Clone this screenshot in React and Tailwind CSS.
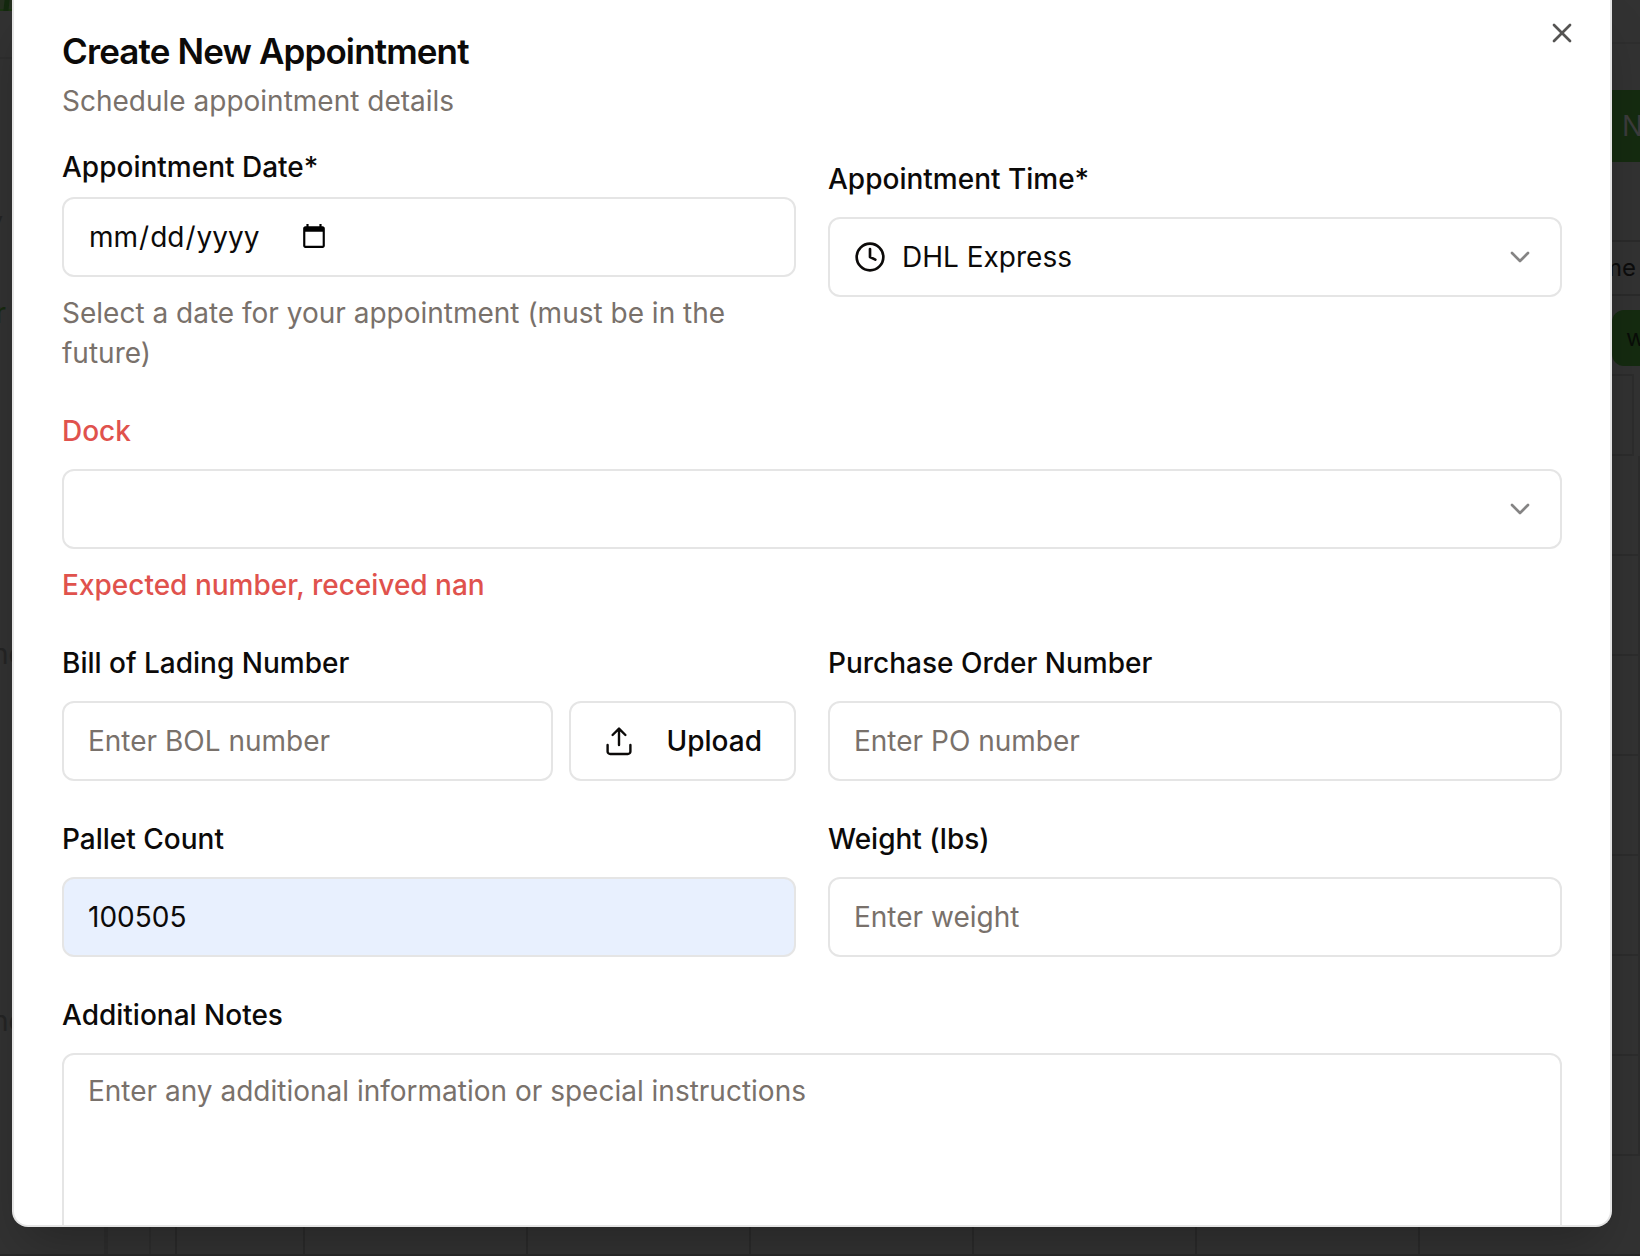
import { ChevronDown, Clock, X } from "lucide-react";

const boxBase = "w-full h-20 rounded-xl border-2 border-[#e5e5e5] px-6 text-[28px] leading-10 text-[#0c0a09] placeholder:text-[#79716b] outline-none";
const box = `${boxBase} bg-white`;

function Label({ htmlFor, error, children }) {
  return (
    <label
      htmlFor={htmlFor}
      className={error ? "block text-[28px] leading-7 font-medium text-[#e0524d]" : "block text-[28px] leading-7 font-medium text-[#0c0a09]"}
    >
      {children}
    </label>
  );
}

function Field({ id, label, error, children }) {
  return (
    <div className="flex flex-1 min-w-0 flex-col gap-6">
      <Label htmlFor={id} error={error}>{label}</Label>
      {children}
    </div>
  );
}

function UploadIcon() {
  return (
    <svg
      viewBox="0 0 32 32"
      className="size-8"
      fill="none"
      stroke="currentColor"
      strokeWidth="2.4"
      strokeLinecap="round"
      strokeLinejoin="round"
      aria-hidden="true"
    >
      <path d="M16 20V4M9.6 10 16 3.6l6.4 6.4" />
      <path d="M4.6 20v6.4a2.6 2.6 0 0 0 2.6 2.6h17.6a2.6 2.6 0 0 0 2.6-2.6V20" />
    </svg>
  );
}

const tableRows = [1, 2, 3, 4, 5, 6, 7];

function Backdrop() {
  return (
    <div aria-hidden="true" className="absolute inset-0 flex flex-col overflow-hidden bg-[#323232]">
      <div className="flex min-h-0 flex-1 justify-between">
        <div className="w-3 overflow-hidden text-[28px] leading-10 text-[#242424]">
          <div className="h-[59px] border-b-2 border-[#2e2e2e]">
            <div className="h-[11px] w-3 border-b-2 border-[#1b3412] bg-[#263020]">
              <div className="ml-1 h-[11px] w-[5px] -skew-x-6 bg-[#14290f]" />
            </div>
          </div>
          <div className="flex h-[234px] items-end justify-end pr-[9px] pb-[56px] text-2xl">y</div>
          <div className="flex justify-end pr-1.5 text-[28px] text-[#17290f]">r</div>
          <div className="flex h-[341px] items-end">
            <span className="-ml-2">ne</span>
          </div>
          <div className="flex h-[367px] items-end">
            <span className="-ml-2">ne</span>
          </div>
        </div>
        <div className="w-[28px] overflow-hidden text-[28px] leading-10">
          <div className="h-11 border-b-2 border-[#2e2e2e]" />
          <div className="mt-[46px] h-[72px] bg-[#152b10] pl-[10px] leading-[72px] text-[#3c3c3c]">N</div>
          <div className="mt-[78px] flex h-[56px] items-center justify-end border-y-2 border-[#2a2a2a] pr-1 text-2xl text-[#0c0c0c]">time</div>
          <div className="mt-[14px] h-[56px] w-20 rounded-xl bg-[#152b10] pl-[14px] text-2xl leading-[56px] text-[#090d08]">w</div>
          <div className="mt-2 h-[82px] w-[22px] border-2 border-l-0 border-[#2c2c2c]" />
          {tableRows.map((n) => (
            <div key={n} className="h-[100px] border-r-2 border-b-2 border-[#2c2c2c]" />
          ))}
        </div>
      </div>
      <div className="flex h-[29px] border-b-2 border-[#292929]">
        <div className="w-[108px] border-r-4 border-[#2d2d2d]" />
        <div className="w-[43px] border-r-2 border-[#2d2d2d]" />
        <div className="w-[26px] border-r-2 border-[#2a2a2a]" />
        <div className="w-[128px] border-r-2 border-[#2a2a2a]" />
        {[1, 2, 3, 4, 5].map((n) => (
          <div key={n} className="w-[223px] border-r-2 border-[#2a2a2a]" />
        ))}
      </div>
    </div>
  );
}

export default function App() {
  return (
    <div className="relative h-screen overflow-hidden pr-7 pb-[29px] pl-3 font-[Inter,sans-serif]">
      <Backdrop />
      <section
        role="dialog"
        aria-labelledby="dialog-title"
        className="relative h-full overflow-hidden rounded-b-2xl border-2 border-t-0 border-[#e5e5e5] bg-white px-12 pt-[33px] text-[#0c0a09] shadow-2xl"
      >
        <button type="button" aria-label="Close" className="absolute top-[17px] right-8 text-[#555453]">
          <X className="size-8" strokeWidth={2} />
        </button>
        <header className="flex flex-col gap-3">
          <h2 id="dialog-title" className="text-[35px] leading-9 font-semibold tracking-tight">Create New Appointment</h2>
          <p className="text-[28px] leading-10 text-[#79716b]">Schedule appointment details</p>
        </header>
        <form className="mt-8 flex flex-col gap-11">
          <div className="flex gap-8">
            <div className="flex min-w-0 flex-1 flex-col gap-4">
              <Label htmlFor="date">Appointment Date*</Label>
              <input id="date" type="date" className={`${box} flex`} />
              <p className="text-[28px] leading-10 text-[#79716b]">Select a date for your appointment (must be in the future)</p>
            </div>
            <div className="flex min-w-0 flex-1 flex-col pt-3">
              <Field id="time" label="Appointment Time*">
                <div className="relative">
                  <select id="time" className={`${box} appearance-none pl-[72px]`}>
                    <option>DHL Express</option>
                  </select>
                  <Clock className="pointer-events-none absolute top-6 left-[26px] size-8" strokeWidth={2} />
                  <ChevronDown className="pointer-events-none absolute top-6 right-[26px] size-8 text-[#858484]" />
                </div>
              </Field>
            </div>
          </div>
          <div className="flex flex-col gap-4">
            <Field id="dock" label="Dock" error>
              <div className="relative">
                <select id="dock" className={`${box} appearance-none`} defaultValue="">
                  <option value="" />
                </select>
                <ChevronDown className="pointer-events-none absolute top-6 right-[26px] size-8 text-[#858484]" />
              </div>
            </Field>
            <p className="text-[28px] leading-10 font-medium text-[#e0524d]">Expected number, received nan</p>
          </div>
          <div className="flex gap-8">
            <Field id="bol" label="Bill of Lading Number">
              <div className="flex gap-4">
                <input id="bol" type="text" placeholder="Enter BOL number" className={`${box} min-w-0 flex-1`} />
                <button type="button" className="flex h-20 items-center gap-8 rounded-xl border-2 border-[#e5e5e5] px-8 text-[28px] font-medium">
                  <UploadIcon />
                  Upload
                </button>
              </div>
            </Field>
            <Field id="po" label="Purchase Order Number">
              <input id="po" type="text" placeholder="Enter PO number" className={box} />
            </Field>
          </div>
          <div className="flex gap-8">
            <Field id="pallets" label="Pallet Count">
              <input id="pallets" type="text" defaultValue="100505" className={`${boxBase} bg-[#e8f0fe]`} />
            </Field>
            <Field id="weight" label="Weight (lbs)">
              <input id="weight" type="text" placeholder="Enter weight" className={box} />
            </Field>
          </div>
          <Field id="notes" label="Additional Notes">
            <textarea
              id="notes"
              placeholder="Enter any additional information or special instructions"
              className="block h-60 w-full resize-none rounded-xl border-2 border-[#e5e5e5] px-6 py-4 text-[28px] leading-10 outline-none placeholder:text-[#79716b]"
            />
          </Field>
        </form>
      </section>
    </div>
  );
}
